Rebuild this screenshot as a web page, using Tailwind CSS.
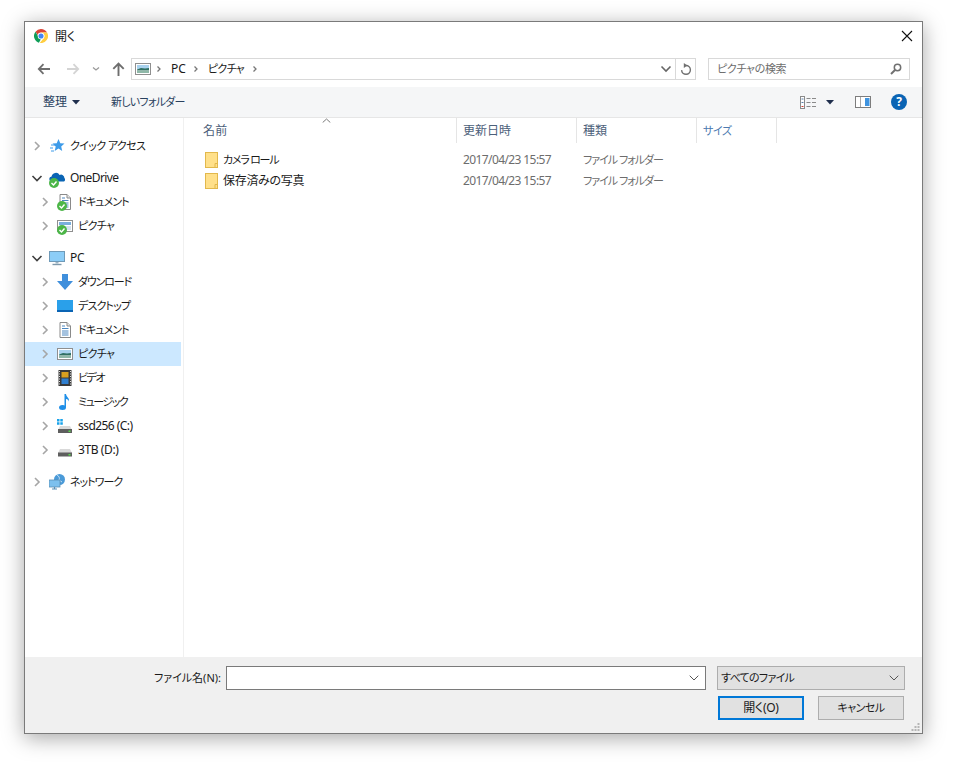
<!DOCTYPE html>
<html lang="ja">
  <head>
    <meta charset="UTF-8" />
    <title>開く</title>
    <script src="https://cdn.jsdelivr.net/npm/@tailwindcss/browser@4"></script>
  </head>
  <body class="bg-white w-[959px] h-[765px] overflow-hidden pt-[21px] pl-[24px] text-[12px] leading-[16px] text-[#1a1a1a] [font-family:'Noto_Sans','Noto_Sans_CJK_JP',sans-serif] [font-feature-settings:'palt']">
    <svg width="0" height="0" class="absolute">
      <defs>
        <symbol id="right" viewBox="0 0 16 16"><path d="M6 4l4 4-4 4" fill="none" stroke="#a6a6a6" stroke-width="1.6"/></symbol>
        <symbol id="down" viewBox="0 0 16 16"><path d="M3.500 6l4.500 4.500L12.500 6" fill="none" stroke="#404040" stroke-width="1.6"/></symbol>
        <symbol id="check" viewBox="0 0 10 10"><circle cx="5" cy="5" r="5" fill="#4cb648"/><path d="M2.500 5l2 2 3-3.500" fill="none" stroke="#fff" stroke-width="1.400"/></symbol>
        <symbol id="doc" viewBox="0 0 16 16"><path d="M3 .5h7l3.500 3.500v11.500H3z" fill="#fff" stroke="#8a8a8a"/><path d="M10 .5v3.500h3.500" fill="#e8e8e8" stroke="#8a8a8a"/><path d="M5 4h3M5 6.500h6.500M5 9h6.500M5 11h6.500M5 13h6.500" stroke="#4a86c0"/></symbol>
        <symbol id="pic" viewBox="0 0 16 12"><rect x=".5" y=".5" width="15" height="11" fill="#fff" stroke="#8f8f8f"/><rect x="2" y="2" width="12" height="4" fill="#a9d2ee"/><path d="M2 6.500l4-1.500 4 .5 4-.5v2.500H2z" fill="#2f6f62"/><rect x="2" y="7.500" width="12" height="2.500" fill="#8fb8a8"/></symbol>
      </defs>
    </svg>

    <div class="w-[899px] h-[713px] bg-white border border-[#7a7a7a] shadow-[0_4px_20px_rgba(0,0,0,0.35)] flex flex-col">
      <!-- title bar -->
      <div class="h-[28px] shrink-0 flex items-center pl-[9px] pr-[8px]">
        <svg width="14" height="14" viewBox="0 0 16 16">
          <path d="M8 0a8 8 0 0 1 6.930 4H8a4 4 0 0 0-3.800 2.800L1.700 3A8 8 0 0 1 8 0z" fill="#db4437"/>
          <path d="M1.700 3l3 5.300a3.800 3.800 0 0 0 3 3.600L5.600 15.600A8 8 0 0 1 1.700 3z" fill="#0f9d58"/>
          <path d="M14.930 4A8 8 0 0 1 6.600 15.900L10.800 10.800A4 4 0 0 0 11 5.500L8 4z" fill="#ffcd40"/>
          <circle cx="8" cy="8" r="3.700" fill="#fff"/>
          <circle cx="8" cy="8" r="2.900" fill="#4285f4"/>
        </svg>
        <span class="ml-[7px] pt-[1px]">開く</span>
        <svg class="ml-auto mr-[1px]" width="12" height="12" viewBox="0 0 12 12"><path d="M1 1l10 10M11 1L1 11" stroke="#111" stroke-width="1.100"/></svg>
      </div>

      <!-- navigation row -->
      <div class="h-[37px] shrink-0 flex items-start pt-[8px] pl-[12px]">
        <div class="w-[94px] h-[22px] flex items-center shrink-0">
          <svg width="14" height="12" viewBox="0 0 14 12"><path d="M13 6H2M6.500 1.200L1.800 6l4.700 4.800" fill="none" stroke="#6e6e6e" stroke-width="1.800"/></svg>
          <svg class="ml-[15px]" width="14" height="12" viewBox="0 0 14 12"><path d="M1 6h11M7.500 1.200L12.200 6l-4.700 4.800" fill="none" stroke="#d4d4d4" stroke-width="1.800"/></svg>
          <svg class="ml-[12px]" width="8" height="6" viewBox="0 0 8 6"><path d="M1 1.500l3 2.500 3-2.500" fill="none" stroke="#9a9a9a" stroke-width="1.300"/></svg>
          <svg class="ml-[12px]" width="13" height="14" viewBox="0 0 13 14"><path d="M6.500 14V2M1.300 6.800L6.500 1.500l5.200 5.300" fill="none" stroke="#6e6e6e" stroke-width="1.900"/></svg>
        </div>
        <div class="w-[565px] h-[22px] border border-[#d9d9d9] flex items-center shrink-0">
          <svg class="ml-[3px]" width="16" height="12"><use href="#pic"/></svg>
          <svg class="ml-[4px]" width="8" height="8" viewBox="0 0 8 8"><path d="M2.500 1.500L5 4 2.500 6.500" fill="none" stroke="#777" stroke-width="1.300"/></svg>
          <span class="ml-[8px]">PC</span>
          <svg class="ml-[6px]" width="8" height="8" viewBox="0 0 8 8"><path d="M2.500 1.500L5 4 2.500 6.500" fill="none" stroke="#777" stroke-width="1.300"/></svg>
          <span class="ml-[8px] text-[11px] tracking-[-0.7px]">ピクチャ</span>
          <svg class="ml-[7px]" width="8" height="8" viewBox="0 0 8 8"><path d="M2.500 1.500L5 4 2.500 6.500" fill="none" stroke="#777" stroke-width="1.300"/></svg>
          <svg class="ml-auto mr-[3px]" width="12" height="8" viewBox="0 0 12 8"><path d="M1.500 1.500L6 6l4.500-4.500" fill="none" stroke="#666" stroke-width="1.600"/></svg>
          <div class="w-[20px] h-full border-l border-[#d9d9d9] flex items-center justify-center">
            <svg width="12" height="13" viewBox="0 0 12 13"><path d="M6 2.500a4.400 4.400 0 1 1-4.400 4.600" fill="none" stroke="#707070" stroke-width="1.400"/><path d="M3.800 0l3.700 2.500-3.700 2.500z" fill="#707070"/></svg>
          </div>
        </div>
        <div class="w-[202px] h-[22px] ml-[12px] border border-[#d9d9d9] flex items-center pl-[8px] pr-[7px] shrink-0 text-[#6d6d6d]">
          <span class="text-[11px] tracking-[-0.35px]">ピクチャの検索</span>
          <svg class="ml-auto" width="12" height="12" viewBox="0 0 12 12"><circle cx="7.500" cy="4.500" r="3.200" fill="none" stroke="#707070" stroke-width="1.500"/><path d="M5 7l-4 4" stroke="#707070" stroke-width="2"/></svg>
        </div>
      </div>

      <!-- toolbar -->
      <div class="h-[31px] shrink-0 bg-[#f5f6f7] border-b border-[#e6e6e6] flex items-center pl-[18px] text-[#29415e]">
        <span>整理</span>
        <svg class="ml-[5px]" width="8" height="5" viewBox="0 0 8 5"><path d="M0 0h8L4 4.500z" fill="#1f2f4d"/></svg>
        <span class="ml-[31px] text-[11px] tracking-[-0.75px]">新しいフォルダー</span>
        <svg class="ml-auto" width="16" height="13" viewBox="0 0 16 13">
          <rect x=".5" y=".5" width="4" height="12" fill="#fff" stroke="#8a8a8a"/>
          <path d="M1.500 3h2M1.500 6.500h2" stroke="#5a7fa8"/><path d="M1.500 10.500h2" stroke="#d04030"/>
          <path d="M6.500 2.500h4M12 2.500h4M6.500 6.500h4M12 6.500h4M6.500 10.500h4M12 10.500h4" stroke="#8a8a8a"/>
        </svg>
        <svg class="ml-[10px]" width="8" height="5" viewBox="0 0 8 5"><path d="M0 0h8L4 4.500z" fill="#1f2f4d"/></svg>
        <svg class="ml-[21px]" width="16" height="12" viewBox="0 0 16 12"><rect x=".5" y=".5" width="15" height="11" fill="#fff" stroke="#7d7d7d"/><rect x="10" y="2" width="4.500" height="8" fill="#3f94e0"/><path d="M5.500 1v10" stroke="#a9a9a9"/></svg>
        <span class="ml-[20px] mr-[15px] w-[16px] h-[16px] rounded-full bg-[#0a64b4] text-white text-[12px] leading-[16px] font-bold text-center">?</span>
      </div>

      <!-- main -->
      <div class="flex-1 flex min-h-0">
        <!-- nav tree -->
        <div class="w-[159px] shrink-0 border-r border-[#f0f0f0] pt-[16px] pr-[1px]">
          <div class="flex h-[24px] items-center pl-[4px]">
            <svg width="16" height="16"><use href="#right"/></svg>
            <svg class="ml-[4px]" width="16" height="16" viewBox="0 0 16 16"><path d="M9.500 1l1.800 4.300 4.200.3-3.300 2.900 1 4.500-3.700-2.400-3.800 2.400 1-4.500-3.200-2.900 4.200-.3z" fill="#3d9be9"/><path d="M2 7h4M1 10h3M2 13h3" stroke="#3d9be9"/></svg>
            <span class="ml-[5px] text-[11px] tracking-[-0.63px]">クイック アクセス</span>
          </div>

          <div class="mt-[8px] flex h-[24px] items-center pl-[4px]">
            <svg width="16" height="16"><use href="#down"/></svg>
            <span class="ml-[4px] relative w-[16px] h-[16px]">
              <svg width="16" height="16" viewBox="0 0 16 16"><path d="M3 11.500a2.500 2.500 0 0 1-.4-5 4.300 4.300 0 0 1 8-1.500 3.300 3.300 0 0 1 4.800 3 2.200 2.200 0 0 1-.4 3.500z" fill="#0a64b4"/></svg>
              <svg class="absolute left-0 bottom-[-2px]" width="10" height="10"><use href="#check"/></svg>
            </span>
            <span class="ml-[5px] tracking-[-0.6px]">OneDrive</span>
          </div>
          <div class="flex h-[24px] items-center pl-[12px]">
            <svg width="16" height="16"><use href="#right"/></svg>
            <span class="ml-[4px] relative w-[16px] h-[16px]">
              <svg width="16" height="16"><use href="#doc"/></svg>
              <svg class="absolute left-0 bottom-[-1px]" width="10" height="10"><use href="#check"/></svg>
            </span>
            <span class="ml-[5px] text-[11px] tracking-[-0.9px]">ドキュメント</span>
          </div>
          <div class="flex h-[24px] items-center pl-[12px]">
            <svg width="16" height="16"><use href="#right"/></svg>
            <span class="ml-[4px] relative w-[16px] h-[16px] flex items-center">
              <svg width="16" height="12" viewBox="0 0 16 12"><rect x=".5" y=".5" width="15" height="11" fill="#fff" stroke="#8f8f8f"/><rect x="2" y="2" width="12" height="3" fill="#7aaedc"/><path d="M6 7h8M6 9h8" stroke="#a8c4dc"/></svg>
              <svg class="absolute left-0 bottom-[-1px]" width="10" height="10"><use href="#check"/></svg>
            </span>
            <span class="ml-[5px] text-[11px] tracking-[-0.7px]">ピクチャ</span>
          </div>

          <div class="mt-[8px] flex h-[24px] items-center pl-[4px]">
            <svg width="16" height="16"><use href="#down"/></svg>
            <svg class="ml-[4px]" width="16" height="16" viewBox="0 0 16 16"><rect x=".5" y="1.500" width="15" height="10" fill="#8ccdf7" stroke="#6f9ab8"/><path d="M6.500 12h3v1.500h-3z" fill="#9db4c4"/><path d="M3.500 14.500h9" stroke="#7f99ab" stroke-width="1.400"/></svg>
            <span class="ml-[5px] tracking-[-0.3px]">PC</span>
          </div>
          <div class="flex h-[24px] items-center pl-[12px]">
            <svg width="16" height="16"><use href="#right"/></svg>
            <svg class="ml-[4px]" width="16" height="16" viewBox="0 0 16 16"><path d="M5 0h6v7h5l-8 9-8-9h5z" fill="#3f8fdc"/></svg>
            <span class="ml-[5px] text-[11px] tracking-[-1.15px]">ダウンロード</span>
          </div>
          <div class="flex h-[24px] items-center pl-[12px]">
            <svg width="16" height="16"><use href="#right"/></svg>
            <svg class="ml-[4px]" width="16" height="16" viewBox="0 0 16 16"><rect x="0" y="2" width="16" height="10" fill="#2aa0ea"/><rect x="0" y="12" width="16" height="2" fill="#0a64b4"/></svg>
            <span class="ml-[5px] text-[11px] tracking-[-0.85px]">デスクトップ</span>
          </div>
          <div class="flex h-[24px] items-center pl-[12px]">
            <svg width="16" height="16"><use href="#right"/></svg>
            <svg class="ml-[4px]" width="16" height="16"><use href="#doc"/></svg>
            <span class="ml-[5px] text-[11px] tracking-[-0.9px]">ドキュメント</span>
          </div>
          <div class="flex h-[24px] items-center pl-[12px] bg-[#cce8ff] mr-[1px]">
            <svg width="16" height="16"><use href="#right"/></svg>
            <svg class="ml-[4px]" width="16" height="12"><use href="#pic"/></svg>
            <span class="ml-[5px] text-[11px] tracking-[-0.7px]">ピクチャ</span>
          </div>
          <div class="flex h-[24px] items-center pl-[12px]">
            <svg width="16" height="16"><use href="#right"/></svg>
            <svg class="ml-[4px]" width="16" height="16" viewBox="0 0 16 16"><rect x="1.500" y="0" width="13" height="16" fill="#3a3a3a"/><rect x="4.500" y="2" width="7" height="5.500" fill="#d9a020"/><rect x="4.500" y="8.500" width="7" height="5.500" fill="#2f7fd0"/><path d="M2.500 1v14M13.500 1v14" stroke="#ddd" stroke-dasharray="1 1.500"/></svg>
            <span class="ml-[5px] text-[11px] tracking-[-1.5px]">ビデオ</span>
          </div>
          <div class="flex h-[24px] items-center pl-[12px]">
            <svg width="16" height="16"><use href="#right"/></svg>
            <svg class="ml-[4px]" width="16" height="16" viewBox="0 0 16 16"><ellipse cx="5.500" cy="13.500" rx="3.500" ry="2.500" fill="#1f8fe8"/><path d="M7.500 13.500V0h1.500c.3 3 3.500 3.500 3 7.500-.5-1.500-1.500-2.500-3-2.500v8.500z" fill="#1f8fe8"/></svg>
            <span class="ml-[5px] text-[11px] tracking-[-1.5px]">ミュージック</span>
          </div>
          <div class="flex h-[24px] items-center pl-[12px]">
            <svg width="16" height="16"><use href="#right"/></svg>
            <svg class="ml-[4px]" width="16" height="16" viewBox="0 0 16 16"><path d="M0 1h2.500v2.500H0zM3.300 1h2.500v2.500H3.300zM0 4.300h2.500v2.500H0zM3.300 4.300h2.500v2.500H3.300z" fill="#19a3ea"/><path d="M3 8h10l2 4H1z" fill="#d9d9d9"/><rect x="1" y="11" width="14" height="4" fill="#5e5e5e"/><rect x="11.500" y="12.500" width="2" height="1.500" fill="#59e04a"/></svg>
            <span class="ml-[5px] tracking-[-0.55px]">ssd256 (C:)</span>
          </div>
          <div class="flex h-[24px] items-center pl-[12px]">
            <svg width="16" height="16"><use href="#right"/></svg>
            <svg class="ml-[4px]" width="16" height="16" viewBox="0 0 16 16"><path d="M3 7h10l2 4H1z" fill="#d9d9d9"/><rect x="1" y="10.500" width="14" height="4" fill="#5e5e5e"/><rect x="11.500" y="12" width="2" height="1.500" fill="#59e04a"/></svg>
            <span class="ml-[5px] tracking-[-0.4px]">3TB (D:)</span>
          </div>

          <div class="mt-[8px] flex h-[24px] items-center pl-[4px]">
            <svg width="16" height="16"><use href="#right"/></svg>
            <svg class="ml-[4px]" width="16" height="16" viewBox="0 0 16 16"><circle cx="10.500" cy="5.500" r="5.500" fill="#4a9ad8"/><path d="M8 1c2 1 3 3 2 5l3 2" stroke="#c6e2f5" fill="none"/><rect x="0" y="6" width="11" height="7" fill="#7cc0ee" stroke="#5a8fb5" stroke-width=".8"/><path d="M3 15h5M5.500 13v2" stroke="#5a8fb5" stroke-width="1.200"/></svg>
            <span class="ml-[5px] text-[11px] tracking-[-1px]">ネットワーク</span>
          </div>
        </div>

        <!-- file list -->
        <div class="flex-1 min-w-0">
          <div class="flex h-[25px] text-[#4c607a] relative">
            <div class="w-[273px] border-r border-[#e5e5e5] pl-[19px] pt-[5px] tracking-[0.3px]">名前</div>
            <svg class="absolute left-[138px] top-[0px]" width="9" height="5" viewBox="0 0 9 5"><path d="M.7 4.500L4.500 1l3.800 3.500" fill="none" stroke="#7a7a7a"/></svg>
            <div class="w-[120px] border-r border-[#e5e5e5] pl-[6px] pt-[5px]">更新日時</div>
            <div class="w-[120px] border-r border-[#e5e5e5] pl-[6px] pt-[5px]">種類</div>
            <div class="w-[80px] border-r border-[#e5e5e5] pl-[6px] pt-[5px] text-[#4c7ab0] text-[11px] tracking-[-0.4px]">サイズ</div>
          </div>
          <div class="pt-[6px]">
            <div class="flex h-[21px] items-center">
              <svg class="ml-[21px]" width="13" height="16" viewBox="0 0 13 16"><rect x=".5" y=".5" width="12" height="15" fill="#ffe08a" stroke="#e2b84c"/><path d="M10 15.500v-4h2.500" fill="none" stroke="#e2b84c"/></svg>
              <span class="ml-[5px] w-[240px] text-[11px] tracking-[-1.25px]">カメラ ロール</span>
              <span class="w-[120px] text-[#6d6d6d] tracking-[-0.6px]">2017/04/23 15:57</span>
              <span class="text-[#6d6d6d] text-[11px] tracking-[-1px]">ファイル フォルダー</span>
            </div>
            <div class="flex h-[21px] items-center">
              <svg class="ml-[21px]" width="13" height="16" viewBox="0 0 13 16"><rect x=".5" y=".5" width="12" height="15" fill="#ffe08a" stroke="#e2b84c"/><path d="M10 15.500v-4h2.500" fill="none" stroke="#e2b84c"/></svg>
              <span class="ml-[5px] w-[240px] tracking-[-0.3px]">保存済みの写真</span>
              <span class="w-[120px] text-[#6d6d6d] tracking-[-0.6px]">2017/04/23 15:57</span>
              <span class="text-[#6d6d6d] text-[11px] tracking-[-1px]">ファイル フォルダー</span>
            </div>
          </div>
        </div>
      </div>

      <!-- footer -->
      <div class="h-[76px] shrink-0 bg-[#f0f0f0] pt-[9px] relative">
        <div class="flex items-center h-[24px]">
          <span class="w-[196px] text-right text-[11px]">ファイル名(N):</span>
          <div class="ml-[5px] w-[480px] h-[24px] bg-white border border-[#7a7a7a] flex items-center justify-end pr-[6px]">
            <svg width="10" height="6" viewBox="0 0 10 6"><path d="M.7.700L5 5l4.300-4.300" fill="none" stroke="#555"/></svg>
          </div>
          <div class="ml-[11px] w-[188px] h-[24px] bg-[#e1e1e1] border border-[#adadad] flex items-center pl-[3px] pr-[5px]">
            <span class="text-[11px] tracking-[-0.7px]">すべてのファイル</span>
            <svg class="ml-auto" width="10" height="6" viewBox="0 0 10 6"><path d="M.7.700L5 5l4.300-4.300" fill="none" stroke="#555"/></svg>
          </div>
        </div>
        <div class="flex mt-[6px] pl-[693px]">
          <button class="w-[86px] h-[24px] bg-[#e1e1e1] border-2 border-[#0078d7] tracking-[-0.3px]">開く(O)</button>
          <button class="ml-[14px] w-[86px] h-[24px] bg-[#e1e1e1] border border-[#adadad] text-[11px] tracking-[-0.5px]">キャンセル</button>
        </div>
        <svg class="absolute right-[2px] bottom-[1px]" width="9" height="9" viewBox="0 0 9 9"><path d="M6.500 0h2v2h-2zM3.500 3h2v2h-2zM6.500 3h2v2h-2zM.500 6h2v2h-2zM3.500 6h2v2h-2zM6.500 6h2v2h-2z" fill="#b5b5b5"/></svg>
      </div>
    </div>
  </body>
</html>
